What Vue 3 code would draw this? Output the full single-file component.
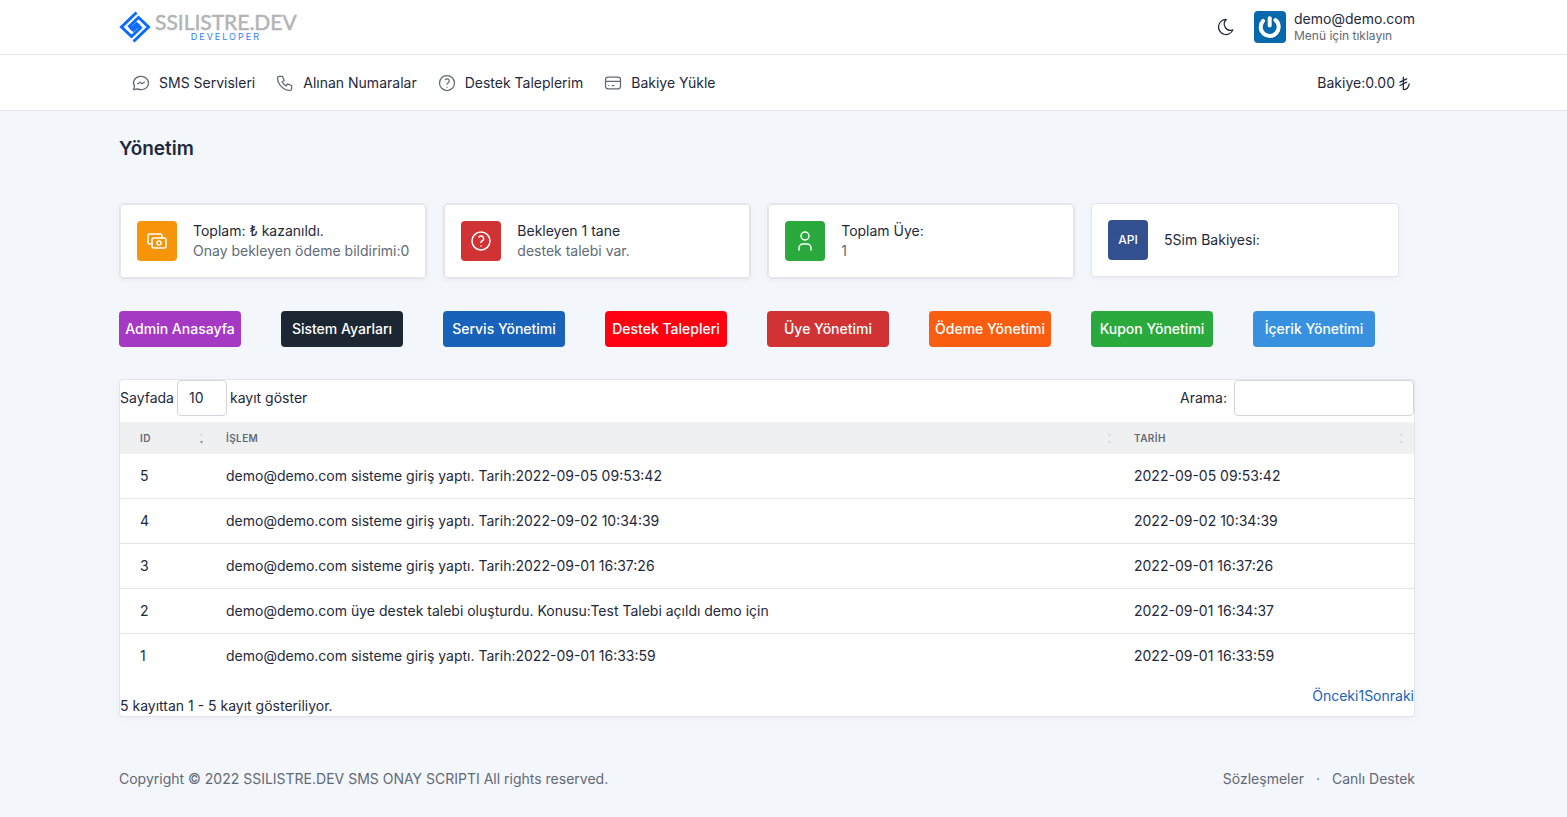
<template>
  <div class="page">
    <header class="topbar">
      <div class="container topbar-row">
        <a href="#" class="brand" aria-label="SSILISTRE.DEV">
          <svg class="brand-mark" viewBox="0 0 32 32" fill="none" stroke="#0a6cff" stroke-width="3">
            <path d="M17.5 1.5 L2.5 16 L12.5 25.5 L21.5 16.8 L17.5 12.8 L11.5 18.6" />
            <path d="M14.5 30.5 L29.5 16 L19.5 6.5 L10.5 15.2 L14.5 19.2 L20.5 13.4" />
          </svg>
          <span class="brand-text">
            <span class="brand-name">SSILISTRE.DEV</span>
            <span class="brand-sub">DEVELOPER</span>
          </span>
        </a>
        <div class="topbar-right">
          <button type="button" class="theme-btn" aria-label="Koyu tema">
            <svg class="icon" viewBox="0 0 24 24">
              <path d="M12 3c.132 0 .263 0 .393 0a7.5 7.5 0 0 0 7.92 12.446a9 9 0 1 1 -8.313 -12.454z" />
            </svg>
          </button>
          <button type="button" class="user">
            <svg class="avatar" viewBox="0 0 32 32">
              <rect width="32" height="32" rx="4" fill="#0769ad" />
              <g fill="none" stroke-linecap="round">
                <g stroke="#034a7e" stroke-width="4.4" opacity=".5">
                  <path d="M9.4 10.6a9 9 0 1 0 12.4 -.8" />
                  <path d="M16.1 7.8v7.4" />
                </g>
                <g stroke="#fff" stroke-width="4">
                  <path d="M9.1 9.9a9 9 0 1 0 12.4 -.8" />
                  <path d="M15.7 7.2v7.2" />
                </g>
              </g>
            </svg>
            <span class="user-info">
              <span class="user-mail">demo@demo.com</span>
              <span class="user-hint">Menü için tıklayın</span>
            </span>
          </button>
        </div>
      </div>
    </header>

    <nav class="navbar">
      <div class="container navbar-row">
        <div class="menu">
          <a v-for="item in menu" :key="item.label" href="#" class="nav-link">
            <svg class="icon" viewBox="0 0 24 24">
              <path v-for="d in item.icon" :key="d" :d="d" />
            </svg>
            <span>{{ item.label }}</span>
          </a>
        </div>
        <span class="balance">
          Bakiye:0.00
          <svg class="icon" viewBox="0 0 24 24">
            <path d="M10 5v15a7 7 0 0 0 7 -7" />
            <path d="M6 15l8 -4" />
            <path d="M14 7l-8 4" />
          </svg>
        </span>
      </div>
    </nav>

    <main class="container">
      <h2 class="page-title">Yönetim</h2>

      <div class="stats">
        <div v-for="s in stats" :key="s.title" class="card" :class="{ single: s.single }">
          <div class="card-inner">
            <span class="stat-icon" :class="s.color">
              <svg v-if="s.icon" class="icon" viewBox="0 0 24 24">
                <path v-for="d in s.icon" :key="d" :d="d" />
              </svg>
              <template v-else>API</template>
            </span>
            <div class="stat-text">
              <div>{{ s.title }}</div>
              <div v-if="s.text" class="muted">{{ s.text }}</div>
            </div>
          </div>
        </div>
      </div>

      <div class="actions">
        <a v-for="a in actions" :key="a.label" href="#" class="btn" :class="a.color">{{ a.label }}</a>
      </div>

      <section class="table-card">
        <div class="table-top">
          <label class="length">
            Sayfada
            <select v-model="pageSize">
              <option>10</option>
              <option>25</option>
              <option>50</option>
              <option>100</option>
            </select>
            kayıt göster
          </label>
          <label class="search">
            Arama:
            <input v-model="search" type="search" />
          </label>
        </div>

        <table>
          <thead>
            <tr>
              <th v-for="c in columns" :key="c.key" :class="'col-' + c.key">
                <div class="th-inner">
                  <span>{{ c.label }}</span>
                  <svg class="sort" viewBox="0 0 5 14">
                    <path d="M2.5 2 L4 5 H1 Z" />
                    <path d="M1 10 H4 L2.5 13 Z" :class="{ active: c.key === 'id' }" />
                  </svg>
                </div>
              </th>
            </tr>
          </thead>
          <tbody>
            <tr v-for="row in filtered" :key="row.id">
              <td>{{ row.id }}</td>
              <td>{{ row.text }}</td>
              <td>{{ row.date }}</td>
            </tr>
          </tbody>
        </table>

        <div class="table-bottom">
          <div class="info">5 kayıttan 1 - 5 kayıt gösteriliyor.</div>
          <div class="paging"><a href="#">Önceki</a><a href="#">1</a><a href="#">Sonraki</a></div>
        </div>
      </section>
    </main>

    <footer class="container footer">
      <span>Copyright © 2022 SSILISTRE.DEV SMS ONAY SCRIPTI All rights reserved.</span>
      <div class="footer-links">
        <a href="#">Sözleşmeler</a>
        <span>·</span>
        <a href="#">Canlı Destek</a>
      </div>
    </footer>
  </div>
</template>

<script setup>
import { ref, computed } from "vue"

const pageSize = ref("10")
const search = ref("")

const helpIcon = [
  "M12 3a9 9 0 1 0 0 18a9 9 0 0 0 0 -18",
  "M12 17v.01",
  "M12 13.5a1.5 1.5 0 0 1 1 -1.5a2.6 2.6 0 1 0 -3 -4"
]

const menu = [
  {
    label: "SMS Servisleri",
    icon: ["M3 20l1.3 -3.9a9 8 0 1 1 3.4 2.9l-4.7 1", "M8 13l3 -2l2 2l3 -2"]
  },
  {
    label: "Alınan Numaralar",
    icon: ["M5 4h4l2 5l-2.5 1.5a11 11 0 0 0 5 5l1.5 -2.5l5 2v4a2 2 0 0 1 -2 2a16 16 0 0 1 -15 -15a2 2 0 0 1 2 -2"]
  },
  { label: "Destek Taleplerim", icon: helpIcon },
  {
    label: "Bakiye Yükle",
    icon: [
      "M6 5h12a3 3 0 0 1 3 3v8a3 3 0 0 1 -3 3h-12a3 3 0 0 1 -3 -3v-8a3 3 0 0 1 3 -3z",
      "M3 10h18",
      "M7 15h.01",
      "M11 15h2"
    ]
  }
]

const stats = [
  {
    title: "Toplam: ₺ kazanıldı.",
    text: "Onay bekleyen ödeme bildirimi:0",
    color: "amber",
    icon: [
      "M9 9h10a2 2 0 0 1 2 2v6a2 2 0 0 1 -2 2h-10a2 2 0 0 1 -2 -2v-6a2 2 0 0 1 2 -2z",
      "M14 12a2 2 0 1 0 0 4a2 2 0 0 0 0 -4",
      "M17 9v-2a2 2 0 0 0 -2 -2h-10a2 2 0 0 0 -2 2v6a2 2 0 0 0 2 2h2"
    ]
  },
  { title: "Bekleyen 1 tane", text: "destek talebi var.", color: "red", icon: helpIcon },
  {
    title: "Toplam Üye:",
    text: "1",
    color: "green",
    icon: ["M12 3a4 4 0 1 0 0 8a4 4 0 0 0 0 -8", "M6 21v-2a4 4 0 0 1 4 -4h4a4 4 0 0 1 4 4v2"]
  },
  { title: "5Sim Bakiyesi:", color: "navy", single: true }
]

const actions = [
  { label: "Admin Anasayfa", color: "purple" },
  { label: "Sistem Ayarları", color: "dark" },
  { label: "Servis Yönetimi", color: "blue" },
  { label: "Destek Talepleri", color: "bright-red" },
  { label: "Üye Yönetimi", color: "red" },
  { label: "Ödeme Yönetimi", color: "orange" },
  { label: "Kupon Yönetimi", color: "green" },
  { label: "İçerik Yönetimi", color: "azure" }
]

const columns = [
  { key: "id", label: "ID" },
  { key: "text", label: "İŞLEM" },
  { key: "date", label: "TARİH" }
]

const rows = [
  { id: 5, text: "demo@demo.com sisteme giriş yaptı. Tarih:2022-09-05 09:53:42", date: "2022-09-05 09:53:42" },
  { id: 4, text: "demo@demo.com sisteme giriş yaptı. Tarih:2022-09-02 10:34:39", date: "2022-09-02 10:34:39" },
  { id: 3, text: "demo@demo.com sisteme giriş yaptı. Tarih:2022-09-01 16:37:26", date: "2022-09-01 16:37:26" },
  { id: 2, text: "demo@demo.com üye destek talebi oluşturdu. Konusu:Test Talebi açıldı demo için", date: "2022-09-01 16:34:37" },
  { id: 1, text: "demo@demo.com sisteme giriş yaptı. Tarih:2022-09-01 16:33:59", date: "2022-09-01 16:33:59" }
]

const filtered = computed(() => rows.filter((r) => r.text.toLowerCase().includes(search.value.toLowerCase())))
</script>

<style>
body {
  margin: 0;
  background: #f3f6fb;
}
</style>

<style scoped>
.page {
  font-family: Inter, "Liberation Sans", sans-serif;
  font-size: 14px;
  line-height: 20px;
  color: #1e293b;
}

.page * {
  box-sizing: border-box;
}

a {
  color: inherit;
  text-decoration: none;
}

button {
  border: 0;
  padding: 0;
  background: none;
  font: inherit;
  color: inherit;
  cursor: pointer;
}

.container {
  max-width: 1329px;
  margin: 0 auto;
  padding-right: 33px;
}

.icon {
  width: 20px;
  height: 20px;
  flex: none;
  fill: none;
  stroke: currentColor;
  stroke-width: 1.5;
  stroke-linecap: round;
  stroke-linejoin: round;
}

/* Header */
.topbar {
  background: #fff;
  border-bottom: 1px solid #e3e5e8;
}

.topbar-row {
  display: flex;
  justify-content: space-between;
  align-items: center;
  height: 54px;
}

.brand {
  display: flex;
  align-items: center;
  gap: 4px;
}

.brand-mark {
  width: 32px;
  height: 32px;
}

.brand-text {
  display: flex;
  flex-direction: column;
  align-items: center;
}

.brand-name {
  font-family: Lato, sans-serif;
  font-size: 21px;
  line-height: 20px;
  color: #b3b4b6;
  -webkit-text-stroke: 0.5px #b3b4b6;
}

.brand-sub {
  font-size: 9px;
  line-height: 10px;
  letter-spacing: 2px;
  color: #2f80ff;
}

.topbar-right {
  display: flex;
  align-items: center;
  gap: 18px;
}

.theme-btn {
  display: flex;
}

.user {
  display: flex;
  align-items: center;
  gap: 8px;
  text-align: left;
}

.avatar {
  width: 32px;
  height: 32px;
}

.user-info {
  display: flex;
  flex-direction: column;
  line-height: 17px;
}

.user-hint {
  font-size: 12px;
  color: #626976;
}

/* Menu */
.navbar {
  background: #fff;
  border-bottom: 1px solid #e3e5e8;
}

.navbar-row {
  display: flex;
  align-items: center;
  justify-content: space-between;
  height: 55px;
}

.menu {
  display: flex;
  gap: 20px;
  padding-left: 12px;
}

.nav-link {
  display: flex;
  align-items: center;
  gap: 8px;
}

.nav-link .icon {
  color: #626976;
}

.balance {
  display: flex;
  align-items: center;
}

/* Content */
.page-title {
  margin: 24px 0 40px;
  font-size: 19px;
  font-weight: 600;
  line-height: 28px;
}

.stats {
  display: grid;
  grid-template-columns: repeat(4, 1fr);
  align-items: start;
  gap: 16px;
  padding-right: 16px;
}

.card {
  background: #fff;
  border: 1px solid #e3e5e8;
  border-radius: 4px;
  box-shadow: 0 2px 4px rgba(30, 41, 59, 0.04);
}

.card-inner {
  display: flex;
  align-items: center;
  gap: 16px;
  padding: 16px;
  border: 1px solid #e3e5e8;
  border-radius: 4px;
}

.single .card-inner {
  border: 0;
}

.stat-text {
  white-space: nowrap;
}

.muted {
  color: #626976;
}

.stat-icon {
  display: flex;
  align-items: center;
  justify-content: center;
  width: 40px;
  height: 40px;
  flex: none;
  border-radius: 4px;
  color: #fff;
  font-size: 12px;
  font-weight: 500;
}

.stat-icon .icon {
  width: 24px;
  height: 24px;
}

.actions {
  display: grid;
  grid-template-columns: repeat(8, 1fr);
  gap: 40px;
  margin: 32px 0;
  padding-right: 40px;
}

.btn {
  padding: 8px 0;
  border-radius: 4px;
  color: #fff;
  font-weight: 500;
  text-align: center;
  white-space: nowrap;
}

.amber { background: #f7950a; }
.red { background: #d13234; }
.green { background: #2aaa3c; }
.navy { background: #32508f; }
.purple { background: #a539c3; }
.dark { background: #1d2733; }
.blue { background: #1862bb; }
.bright-red { background: #ff0010; }
.orange { background: #f95d10; }
.azure { background: #3791df; }

/* Table */
.table-card {
  background: #fff;
  border: 1px solid #e3e5e8;
  border-radius: 4px;
  box-shadow: 0 2px 4px rgba(30, 41, 59, 0.04);
}

.table-top {
  display: flex;
  justify-content: space-between;
  margin-bottom: 6px;
}

.length,
.search {
  display: flex;
  align-items: center;
  gap: 3px;
}

.search {
  gap: 7px;
}

select,
input {
  height: 36px;
  padding: 0 12px;
  border: 1px solid #d3d5da;
  border-radius: 4px;
  background: #fff;
  font: inherit;
  color: inherit;
  appearance: none;
}

select {
  width: 50px;
  padding: 0 11px;
}

input {
  width: 180px;
}

table {
  width: 100%;
  table-layout: fixed;
  border-collapse: separate;
  border-spacing: 0;
}

th {
  height: 32px;
  padding: 0 14px 0 8px;
  background: #eff0f2;
  color: #626976;
  font-size: 10px;
  font-weight: 600;
  line-height: 16px;
  letter-spacing: 0.4px;
  text-align: left;
}

.col-id {
  width: 98px;
}

.col-date {
  width: 288px;
}

.th-inner {
  display: flex;
  justify-content: space-between;
  align-items: center;
}

.sort {
  width: 5px;
  height: 14px;
  fill: #d5d7db;
}

.sort .active {
  fill: #8d929b;
}

td {
  height: 45px;
  padding: 0 8px;
  border-bottom: 1px solid #e3e5e8;
}

th:first-child,
td:first-child {
  padding-left: 20px;
}

th:last-child {
  padding-right: 10px;
}

tbody tr:last-child td {
  border-bottom-color: transparent;
}

.table-bottom {
  display: flex;
  justify-content: space-between;
  padding-top: 7px;
}

.info {
  padding-top: 10px;
}

.paging {
  color: #1862bb;
}

/* Footer */
.footer {
  display: flex;
  justify-content: space-between;
  margin-top: 52px;
  padding-bottom: 28px;
  color: #626976;
}

.footer-links {
  display: flex;
  gap: 12px;
}
</style>
